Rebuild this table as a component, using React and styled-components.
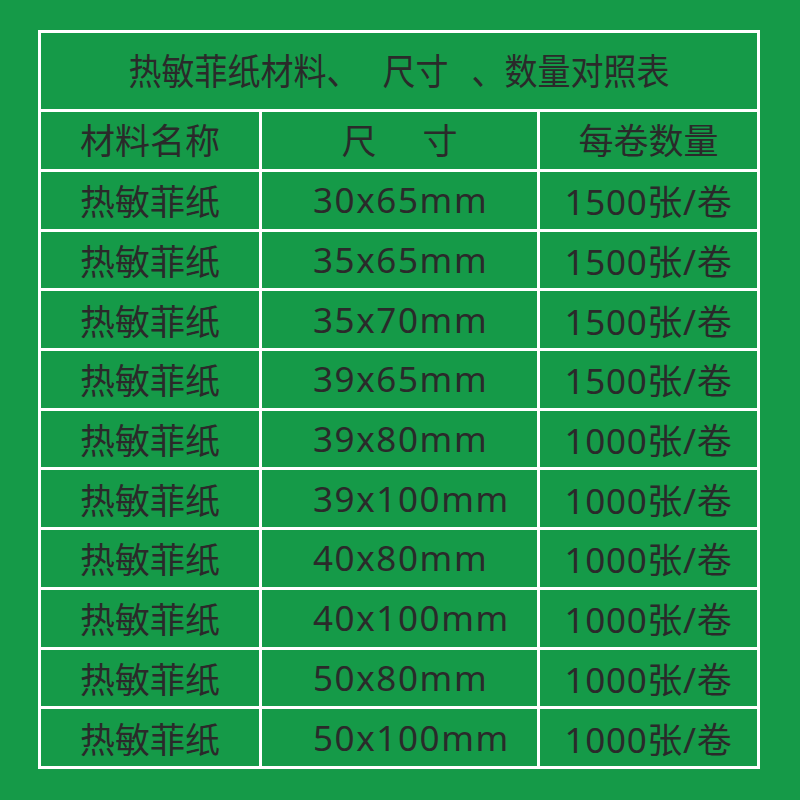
import React from "react"
import styled, { createGlobalStyle } from "styled-components"

const GlobalStyle = createGlobalStyle`
  html, body {
    margin: 0;
    padding: 0;
    background: #159a48;
  }
  body {
    width: 800px;
    height: 800px;
    overflow: hidden;
    font-family: "Noto Sans", "Noto Sans CJK SC", sans-serif;
    color: #2a2a2a;
  }
`

const rows = [
  ["30x65mm", "1500张/卷"],
  ["35x65mm", "1500张/卷"],
  ["35x70mm", "1500张/卷"],
  ["39x65mm", "1500张/卷"],
  ["39x80mm", "1000张/卷"],
  ["39x100mm", "1000张/卷"],
  ["40x80mm", "1000张/卷"],
  ["40x100mm", "1000张/卷"],
  ["50x80mm", "1000张/卷"],
  ["50x100mm", "1000张/卷"],
]

const App = () => {
  return (
    <>
      <GlobalStyle />
      <Page>
        <Table>
          <Title>
            <TitleText>
              热敏菲纸材料、<Gap />尺寸<Gap />、数量对照表
            </TitleText>
          </Title>
          <Cell header>材料名称</Cell>
          <Cell header>
            <Spread>
              <span>尺</span>
              <span>寸</span>
            </Spread>
          </Cell>
          <Cell header>每卷数量</Cell>
          {rows.map(([size, qty]) => (
            <React.Fragment key={size}>
              <Cell>热敏菲纸</Cell>
              <Cell left>{size}</Cell>
              <Cell qty>{qty}</Cell>
            </React.Fragment>
          ))}
        </Table>
      </Page>
    </>
  )
}

export default App

const Page = styled.div`
  padding: 30px 0 0 38px;
`

const Table = styled.div`
  display: grid;
  grid-template-columns: 218px 275px 217px;
  grid-template-rows: 76px 57px repeat(10, 56.7px);
  gap: 3px;
  padding: 3px;
  width: max-content;
  background: #ffffff;
`

const Title = styled.div`
  grid-column: 1 / -1;
  background: #159a48;
  display: flex;
  align-items: center;
  justify-content: center;
  padding-bottom: 2px;
  box-sizing: border-box;
`

const TitleText = styled.span`
  display: inline-block;
  font-family: "Noto Sans CJK SC", sans-serif;
  font-size: 33px;
  white-space: nowrap;
  transform: scaleY(1.1);
`

const Gap = styled.span`
  display: inline-block;
  width: 23px;
`

const Cell = styled.div`
  background: #159a48;
  display: flex;
  align-items: center;
  justify-content: ${p => (p.left ? "flex-start" : "center")};
  padding-left: ${p => (p.left ? "51px" : "0")};
  padding-bottom: ${p => (p.header ? "4px" : "1px")};
  box-sizing: border-box;
  font-size: 35px;
  letter-spacing: ${p => (p.left ? "1.6px" : p.qty ? "0.7px" : "0")};
  white-space: nowrap;
`

const Spread = styled.div`
  display: flex;
  gap: 46px;
`
